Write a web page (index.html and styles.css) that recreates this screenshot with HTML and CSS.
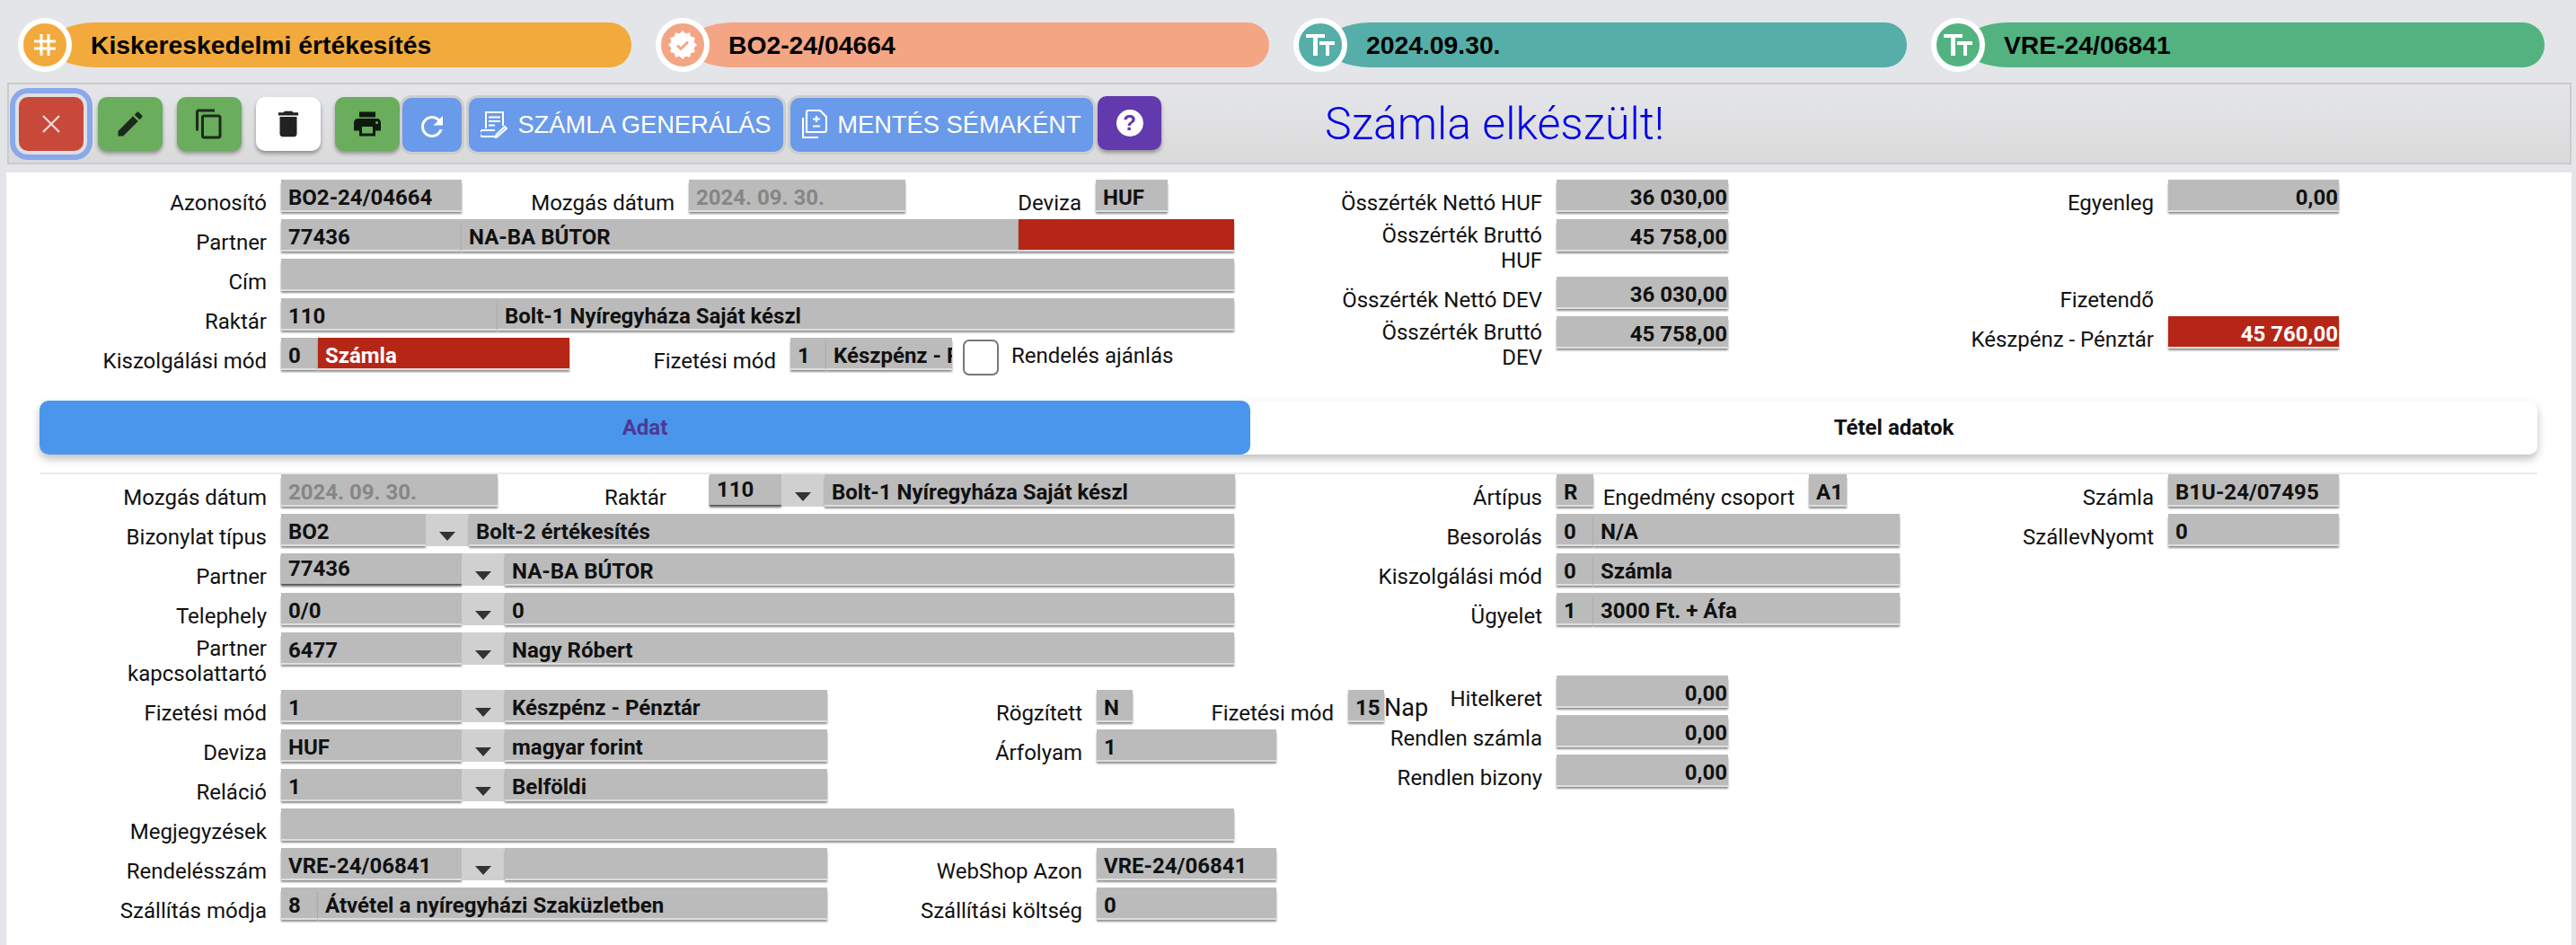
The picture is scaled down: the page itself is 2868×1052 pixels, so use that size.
FILE: index.html
```html
<!DOCTYPE html>
<html lang="hu">
<head>
<meta charset="utf-8">
<title>Számla</title>
<link rel="stylesheet" href="styles.css">
</head>
<body>
<header class="pills">
  <div class="pill pill-orange">
    <span class="pill-icon"><svg width="26" height="26" viewBox="0 0 26 26" fill="none" stroke="#fff" stroke-width="3"><path d="M9 1v24M17 1v24M1 9h24M1 17h24"/></svg></span>
    <span class="pill-bar">Kiskereskedelmi értékesítés</span>
  </div>
  <div class="pill pill-salmon">
    <span class="pill-icon"><svg width="32" height="32" viewBox="0 0 32 32"><polygon fill="#fff" points="32,16 28.56,19.36 29.86,24 25.19,25.19 24,29.86 19.36,28.56 16,32 12.64,28.56 8,29.86 6.81,25.19 2.14,24 3.44,19.36 0,16 3.44,12.64 2.14,8 6.81,6.81 8,2.14 12.64,3.44 16,0 19.36,3.44 24,2.14 25.19,6.81 29.86,8 28.56,12.64"/><path d="M10 16.5l4 4 8-8" fill="none" stroke="#f4a583" stroke-width="3"/></svg></span>
    <span class="pill-bar">BO2-24/04664</span>
  </div>
  <div class="pill pill-teal">
    <span class="pill-icon"><svg width="32" height="24" viewBox="0 0 32 24" fill="#fff"><path d="M0 0h21v4h-8v20H8V4H0zM15 8h17v4h-6v12h-4V12h-7z"/></svg></span>
    <span class="pill-bar">2024.09.30.</span>
  </div>
  <div class="pill pill-green">
    <span class="pill-icon"><svg width="32" height="24" viewBox="0 0 32 24" fill="#fff"><path d="M0 0h21v4h-8v20H8V4H0zM15 8h17v4h-6v12h-4V12h-7z"/></svg></span>
    <span class="pill-bar">VRE-24/06841</span>
  </div>
</header>

<nav class="toolbar">
  <button class="btn btn-icon btn-red btn-focus" type="button"><svg width="22" height="22" viewBox="0 0 22 22" stroke="#efdcd8" stroke-width="2.2" fill="none"><path d="M2 2l18 18M20 2L2 20"/></svg></button>
  <button class="btn btn-icon btn-green" type="button"><svg width="36" height="36" viewBox="0 0 24 24" fill="#1d2a1b"><path d="M3 17.25V21h3.75L17.81 9.94l-3.75-3.75L3 17.25zM20.71 7.04c.39-.39.39-1.02 0-1.41l-2.34-2.34c-.39-.39-1.02-.39-1.41 0l-1.83 1.83 3.75 3.75 1.83-1.83z"/></svg></button>
  <button class="btn btn-icon btn-green" type="button"><svg width="36" height="36" viewBox="0 0 24 24" fill="#1d2a1b"><path d="M16 1H4c-1.1 0-2 .9-2 2v14h2V3h12V1zm3 4H8c-1.1 0-2 .9-2 2v14c0 1.1.9 2 2 2h11c1.1 0 2-.9 2-2V7c0-1.1-.9-2-2-2zm0 16H8V7h11v14z"/></svg></button>
  <button class="btn btn-icon btn-white" type="button"><svg width="38" height="38" viewBox="0 0 24 24" fill="#222"><path d="M6 19c0 1.1.9 2 2 2h8c1.1 0 2-.9 2-2V7H6v12zM19 4h-3.5l-1-1h-5l-1 1H5v2h14V4z"/></svg></button>
  <button class="btn btn-icon btn-green" type="button"><svg width="36" height="36" viewBox="0 0 24 24" fill="#0f1a0e"><path d="M19 8H5c-1.66 0-3 1.34-3 3v6h4v4h12v-4h4v-6c0-1.66-1.34-3-3-3zm-3 11H8v-5h8v5zm3-7c-.55 0-1-.45-1-1s.45-1 1-1 1 .45 1 1-.45 1-1 1zm-1-9H6v4h12V3z"/></svg></button>
  <button class="btn btn-blue btn-refresh" type="button"><svg width="36" height="36" viewBox="0 0 24 24" fill="#fff"><path d="M17.65 6.35C16.2 4.9 14.21 4 12 4c-4.42 0-7.99 3.58-7.99 8s3.57 8 7.99 8c3.73 0 6.84-2.55 7.73-6h-2.08c-.82 2.33-3.04 4-5.65 4-3.31 0-6-2.69-6-6s2.69-6 6-6c1.66 0 3.14.69 4.22 1.78L13 11h7V4l-2.35 2.35z"/></svg></button>
  <button class="btn btn-blue btn-text btn-gen" type="button"><svg width="30" height="30" viewBox="0 0 30 30" fill="none" stroke="#fff" stroke-width="2"><path d="M6 19V1h19v15M9 6.500h13M9 11h13M9 15.500h7M16 21H2.500a2.800 2.800 0 0 0 0 7H18M29 19l-10 9-2 1 .5-3 9.500-9z"/></svg>SZÁMLA GENERÁLÁS</button>
  <button class="btn btn-blue btn-text btn-save" type="button"><svg width="28" height="33" viewBox="0 0 28 33" fill="none" stroke="#fff" stroke-width="2.200"><path d="M5 25V3a2 2 0 0 1 2-2h13l7 7v15a2 2 0 0 1-2 2zM1 9v22h17M16 7v7M12 10.500h8M12 18.500h8"/></svg>MENTÉS SÉMAKÉNT</button>
  <button class="btn btn-icon btn-purple" type="button"><span class="help-dot">?</span></button>
  <div class="message">Számla elkészült!</div>
</nav>

<main class="panel">
  <section class="section sec-head">
    <div class="col col-a">
      <div class="row">
        <label class="lbl w290">Azonosító</label><div class="f w201">BO2-24/04664</div>
        <label class="lbl w237">Mozgás dátum</label><div class="f w241 dim">2024. 09. 30.</div>
        <label class="lbl w196">Deviza</label><div class="f w80">HUF</div>
      </div>
      <div class="row">
        <label class="lbl w290">Partner</label><div class="f w201">77436</div><div class="f w620">NA-BA BÚTOR</div><div class="f w240 red"></div>
      </div>
      <div class="row">
        <label class="lbl w290">Cím</label><div class="f w1061"></div>
      </div>
      <div class="row">
        <label class="lbl w290">Raktár</label><div class="f w241">110</div><div class="f w820">Bolt-1 Nyíregyháza Saját készl</div>
      </div>
      <div class="row">
        <label class="lbl w290">Kiszolgálási mód</label><div class="f w41">0</div><div class="f w280 red">Számla</div>
        <label class="lbl w230">Fizetési mód</label><div class="f w40">1</div><div class="f w140">Készpénz - Pénztár</div>
        <span class="check"></span><label class="lbl-check">Rendelés ajánlás</label>
      </div>
    </div>
    <div class="col col-b">
      <div class="row"><label class="lbl w337">Összérték Nettó HUF</label><div class="f w191 num">36 030,00</div></div>
      <div class="row tall"><label class="lbl w337 two">Összérték Bruttó<br>HUF</label><div class="f w191 num">45 758,00</div></div>
      <div class="row"><label class="lbl w337">Összérték Nettó DEV</label><div class="f w191 num">36 030,00</div></div>
      <div class="row tall"><label class="lbl w337 two">Összérték Bruttó<br>DEV</label><div class="f w191 num">45 758,00</div></div>
    </div>
    <div class="col col-c">
      <div class="row"><label class="lbl w398">Egyenleg</label><div class="f w190 num">0,00</div></div>
      <div class="row tall"></div>
      <div class="row"><label class="lbl w398">Fizetendő</label></div>
      <div class="row"><label class="lbl w398">Készpénz - Pénztár</label><div class="f w190 num red">45 760,00</div></div>
    </div>
  </section>

  <div class="tabs">
    <div class="tab tab-active">Adat</div>
    <div class="tab">Tétel adatok</div>
  </div>
  <hr class="rule">

  <section class="section">
    <div class="col col-a">
      <div class="row">
        <label class="lbl w290">Mozgás dátum</label><div class="f w241 dim">2024. 09. 30.</div>
        <label class="lbl w188 far">Raktár</label><div class="f w80 up">110</div><span class="dd"></span><div class="f w457">Bolt-1 Nyíregyháza Saját készl</div>
      </div>
      <div class="row">
        <label class="lbl w290">Bizonylat típus</label><div class="f w161">BO2</div><span class="dd"></span><div class="f w852">Bolt-2 értékesítés</div>
      </div>
      <div class="row">
        <label class="lbl w290">Partner</label><div class="f w201 up">77436</div><span class="dd"></span><div class="f w812">NA-BA BÚTOR</div>
      </div>
      <div class="row">
        <label class="lbl w290">Telephely</label><div class="f w201">0/0</div><span class="dd"></span><div class="f w812">0</div>
      </div>
      <div class="row tall">
        <label class="lbl w290 two">Partner<br>kapcsolattartó</label><div class="f w201">6477</div><span class="dd"></span><div class="f w812">Nagy Róbert</div>
      </div>
      <div class="row">
        <label class="lbl w290">Fizetési mód</label><div class="f w201">1</div><span class="dd"></span><div class="f w359">Készpénz - Pénztár</div>
        <label class="lbl w284">Rögzített</label><div class="f w40">N</div>
        <label class="lbl w224">Fizetési mód</label><div class="f w40">15</div><span class="nap">Nap</span>
      </div>
      <div class="row">
        <label class="lbl w290">Deviza</label><div class="f w201">HUF</div><span class="dd"></span><div class="f w359">magyar forint</div>
        <label class="lbl w284">Árfolyam</label><div class="f w200">1</div>
      </div>
      <div class="row">
        <label class="lbl w290">Reláció</label><div class="f w201">1</div><span class="dd"></span><div class="f w359">Belföldi</div>
      </div>
      <div class="row">
        <label class="lbl w290">Megjegyzések</label><div class="f w1061"></div>
      </div>
      <div class="row">
        <label class="lbl w290">Rendelésszám</label><div class="f w201">VRE-24/06841</div><span class="dd"></span><div class="f w359"></div>
        <label class="lbl w284">WebShop Azon</label><div class="f w200">VRE-24/06841</div>
      </div>
      <div class="row">
        <label class="lbl w290">Szállítás módja</label><div class="f w41">8</div><div class="f w567">Átvétel a nyíregyházi Szaküzletben</div>
        <label class="lbl w284">Szállítási költség</label><div class="f w200">0</div>
      </div>
    </div>
    <div class="col col-b">
      <div class="row">
        <label class="lbl w337">Ártípus</label><div class="f w41">R</div>
        <label class="lbl w224">Engedmény csoport</label><div class="f w42">A1</div>
      </div>
      <div class="row"><label class="lbl w337">Besorolás</label><div class="f w41">0</div><div class="f w341">N/A</div></div>
      <div class="row"><label class="lbl w337">Kiszolgálási mód</label><div class="f w41">0</div><div class="f w341">Számla</div></div>
      <div class="row"><label class="lbl w337">Ügyelet</label><div class="f w41">1</div><div class="f w341">3000 Ft. + Áfa</div></div>
      <div class="spacer"></div>
      <div class="row"><label class="lbl w337">Hitelkeret</label><div class="f w191 num">0,00</div></div>
      <div class="row"><label class="lbl w337">Rendlen számla</label><div class="f w191 num">0,00</div></div>
      <div class="row"><label class="lbl w337">Rendlen bizony</label><div class="f w191 num">0,00</div></div>
    </div>
    <div class="col col-c">
      <div class="row"><label class="lbl w398">Számla</label><div class="f w190">B1U-24/07495</div></div>
      <div class="row"><label class="lbl w398">SzállevNyomt</label><div class="f w190">0</div></div>
    </div>
  </section>
</main>
</body>
</html>
```
FILE: styles.css
```css
* { box-sizing: border-box; }
html, body { margin: 0; height: 100%; }
body {
  width: 2868px;
  height: 1052px;
  overflow: hidden;
  background: #e4e5e9;
  font-family: Roboto, "Liberation Sans", sans-serif;
  font-size: 24px;
  color: #111;
  display: flex;
  flex-direction: column;
}

/* top pills */
.pills { display: flex; gap: 27px; padding: 20px 0 0 20px; flex: none; }
.pill { width: 683px; height: 60px; display: flex; align-items: center; }
.pill-icon {
  flex: none; width: 60px; height: 60px; border-radius: 50%;
  border: 6px solid #fff; display: flex; align-items: center; justify-content: center;
  position: relative; z-index: 1;
  background: var(--c);
}
.pill-bar {
  flex: 1; height: 50px; margin-left: -24px; padding-left: 45px;
  border-radius: 50px 24px 24px 50px / 25px;
  background: var(--c);
  display: flex; align-items: center;
  font: bold 28.3px "Liberation Sans", sans-serif; color: #000;
}
.pill-orange { --c: #f2aa3c; }
.pill-salmon { --c: #f4a583; }
.pill-teal { --c: #55aea8; }
.pill-green { --c: #52b381; }

/* toolbar */
.toolbar {
  flex: none; height: 91px; margin: 12px 5px 0 8px;
  border: 2px solid #cbcbcb;
  background: linear-gradient(#e5e6ea, #dadada);
  display: flex; align-items: center;
  padding-left: 11px;
}
.btn {
  border: 0; padding: 0; height: 60px; border-radius: 10px; flex: none;
  display: flex; align-items: center; justify-content: center;
  box-shadow: 0 3px 4px rgba(0,0,0,.35);
}
.btn-icon { width: 72px; margin-left: 16px; }
.btn-focus { margin-left: 0; box-shadow: 0 0 0 4px #dfe0e3, 0 0 0 10px #8aa8ea; margin-right: 0; }
.btn-red { background: #c8493a; }
.btn-green { background: #69ad5d; }
.btn-white { background: #fff; }
.btn-purple { background: #6339ae; width: 71px; margin-left: 5px; margin-top: -1px; }
.btn-blue { background: #6a9aea; box-shadow: 0 0 0 3px #cdcdcd; position: relative; top: 1px; }
.btn-refresh { width: 66px; margin-left: 3px; padding-top: 4px; }
.btn-text {
  font: 27.3px "Liberation Sans", sans-serif; color: #fff; gap: 11px; white-space: nowrap;
}
.btn-gen { width: 350px; margin-left: 8px; }
.btn-save { width: 337px; margin-left: 8px; }
.help-dot {
  width: 30px; height: 30px; border-radius: 50%; background: #fff; color: #6339ae;
  font: bold 24px/30px "Liberation Sans", sans-serif; text-align: center;
}
.message {
  margin-left: 182px; color: #0000e6; font: 300 50px Roboto, sans-serif; white-space: nowrap;
}

/* white panel */
.panel {
  flex: 1; margin: 9px 5px 0 7px; background: #fff; padding-top: 8px;
}
.section { display: flex; align-items: flex-start; }
.sec-head { height: 246px; }
.col { flex: none; display: flex; flex-direction: column; }
.col-a { width: 1373px; }
.col-b { width: 620px; }
.col-c { width: 400px; }

.row { display: flex; align-items: flex-start; height: 44px; flex: none; }
.row.tall { height: 64px; }
.spacer { height: 48px; flex: none; }

.lbl {
  flex: none; text-align: right; padding-right: 16px; line-height: 28px; margin-top: 12px;
  font-size: 24px; color: #111; white-space: nowrap;
}
.lbl.two { margin-top: 4px; }
.lbl.far { padding-right: 48px; }
.lbl-check { line-height: 40px; margin-left: 14px; white-space: nowrap; }
.check { flex: none; width: 40px; height: 40px; margin: 2px 0 0 12px; background: #fff; border: 2px solid #777; border-radius: 7px; }
.nap { font-size: 27px; line-height: 40px; flex: none; }

.f {
  flex: none; height: 34px; background: #bbb; padding: 0 8px;
  font-weight: 700; font-size: 24px; line-height: 40px; color: #111;
  overflow: hidden; white-space: nowrap;
  box-shadow: 0 2px 0 #dedede, 0 4px 2px #8f8f8f;
}
.f.up { line-height: 34px; box-shadow: 0 1px 1px #555, 0 3px 2px #777; }
.f.dim { color: #868686; }
.f.red { background: #b52616; color: #fff; }
.f.num { text-align: right; padding-right: 1px; }

.dd { flex: none; width: 48px; height: 36px; background: #d0d0d0; display: flex; justify-content: center; padding-top: 20px; }
.dd::after { content: ""; width: 0; height: 0; border-left: 9px solid transparent; border-right: 9px solid transparent; border-top: 10px solid #333; }

/* tabs */
.tabs {
  display: flex; height: 60px; margin-left: 37px; width: 2781px;
  border-radius: 10px; box-shadow: 0 5px 10px rgba(0,0,0,.25);
}
.tab {
  flex: 1; display: flex; align-items: center; justify-content: center;
  font-weight: 700; border-radius: 10px; background: #fff; color: #111;
}
.tab-active { flex: none; width: 1348px; background: #4a96ec; color: #4a3a96; }
.rule { height: 2px; margin: 20px 0 0 37px; width: 2781px; border: 0; background: #eaeaea; }

/* width helpers (label widths include their 16px right padding) */
.w40 { width: 40px; } .w41 { width: 41px; } .w42 { width: 42px; } .w80 { width: 80px; }
.w140 { width: 140px; } .w161 { width: 161px; } .w188 { width: 236px; } .w190 { width: 190px; }
.w191 { width: 191px; } .w196 { width: 212px; } .w200 { width: 200px; } .w201 { width: 201px; }
.w224 { width: 240px; } .w230 { width: 246px; } .w237 { width: 253px; } .w240 { width: 240px; }
.w241 { width: 241px; } .w280 { width: 280px; } .w284 { width: 300px; } .w290 { width: 306px; }
.w337 { width: 353px; } .w341 { width: 341px; } .w359 { width: 359px; } .w398 { width: 414px; }
.w457 { width: 457px; } .w567 { width: 567px; } .w620 { width: 620px; } .w812 { width: 812px; }
.w820 { width: 820px; } .w852 { width: 852px; } .w1061 { width: 1061px; }
```
